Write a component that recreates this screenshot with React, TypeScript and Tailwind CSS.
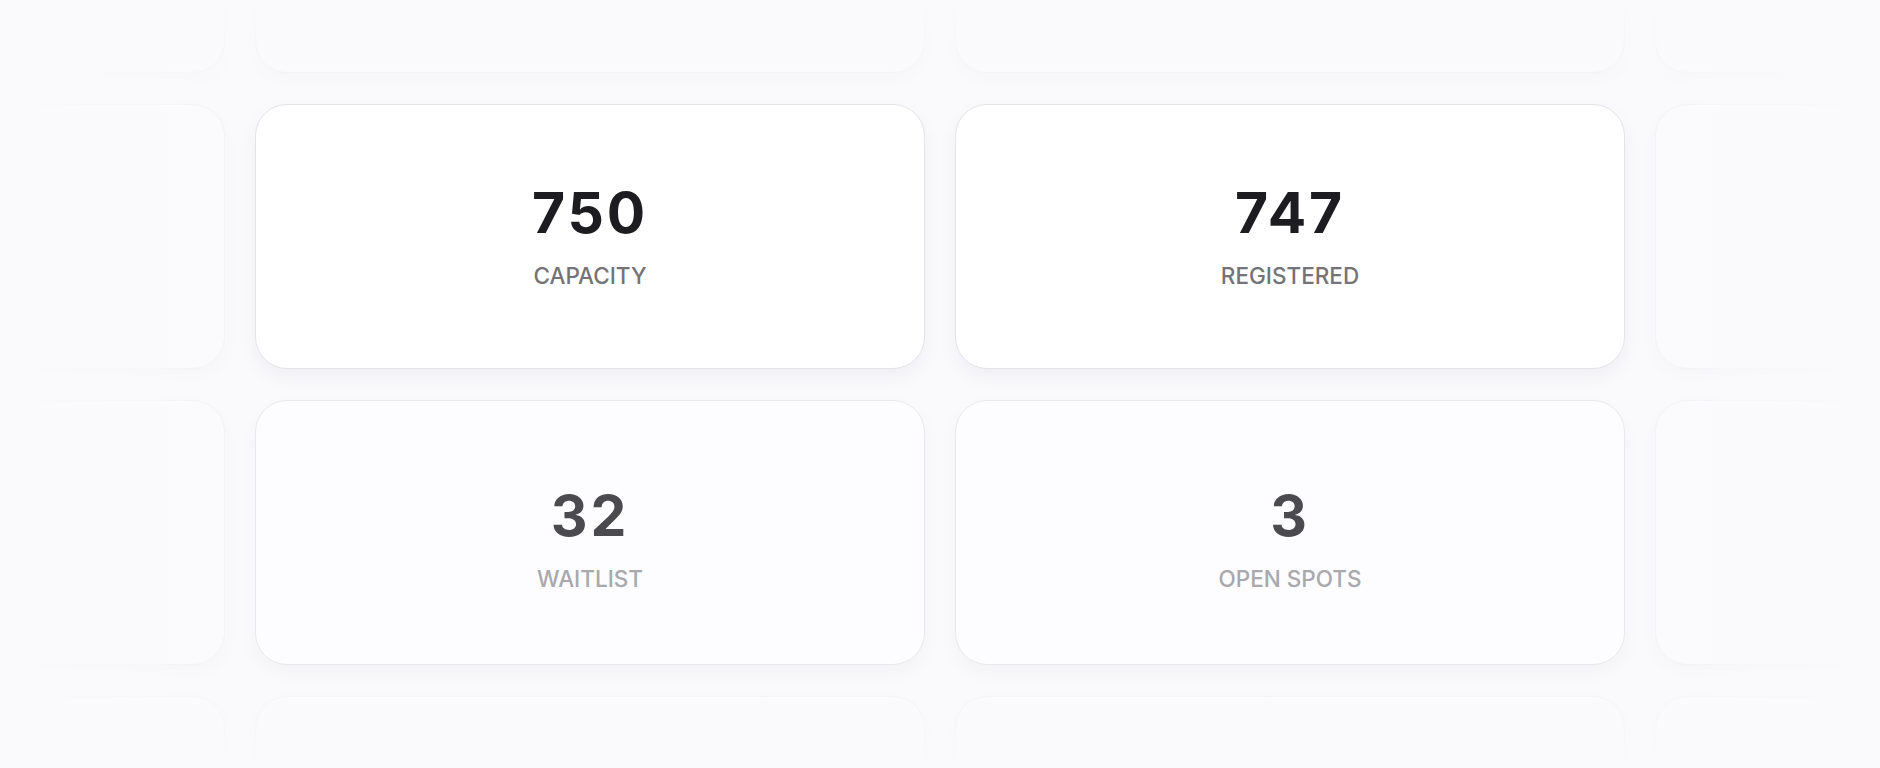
import React from 'react';

// ─── Stat card grid ────────────────────────────────────────────────────────────

type Stat = { value: string; label: string; dim?: boolean };

const stats: Stat[] = [
  { value: '750', label: 'Capacity' },
  { value: '747', label: 'Registered' },
  { value: '32', label: 'Waitlist', dim: true },
  { value: '3', label: 'Open Spots', dim: true },
];

const GhostCard: React.FC = () => (
  <div className="h-[265px] rounded-[32px] border border-[#ecebef] bg-[#fcfbfd] opacity-60 shadow-[0_6px_16px_rgba(20,10,40,0.03)]" />
);

const StatCard: React.FC<{ stat: Stat }> = ({ stat }) => (
  <div
    className={
      stat.dim
        ? 'flex h-[265px] flex-col items-center justify-center rounded-[32px] border border-[#e9e8ec] bg-[#fdfcfe] pt-[14px] shadow-[0_8px_20px_rgba(20,10,40,0.03)]'
        : 'flex h-[265px] flex-col items-center justify-center rounded-[32px] border border-[#e4e3e7] bg-white shadow-[0_8px_20px_rgba(20,10,40,0.045)]'
    }
  >
    <div
      className={
        stat.dim
          ? 'text-[57px] leading-none font-bold tracking-[0.05em] text-[#4b4a4f]'
          : 'text-[57px] leading-none font-bold tracking-[0.05em] text-[#1d1c20]'
      }
    >
      {stat.value}
    </div>
    <div
      className={
        stat.dim
          ? 'mt-[22px] text-[22.5px] leading-[26px] font-medium uppercase tracking-normal text-[#a9a8ad]'
          : 'mt-[22px] text-[22.5px] leading-[26px] font-medium uppercase tracking-normal text-[#747378]'
      }
    >
      {stat.label}
    </div>
  </div>
);

export default function App() {
  return (
    <div
      className="relative flex h-[768px] w-full items-center justify-center overflow-hidden bg-[#faf9fc]"
      style={{ fontFamily: 'Inter, "Noto Sans", sans-serif' }}
    >
      <div className="grid shrink-0 grid-cols-[repeat(4,670px)] grid-rows-[repeat(4,265px)] gap-x-[30px] gap-y-[31px]">
        {/* top ghost row */}
        <GhostCard />
        <GhostCard />
        <GhostCard />
        <GhostCard />

        <GhostCard />
        <StatCard stat={stats[0]} />
        <StatCard stat={stats[1]} />
        <GhostCard />

        <GhostCard />
        <StatCard stat={stats[2]} />
        <StatCard stat={stats[3]} />
        <GhostCard />

        {/* bottom ghost row */}
        <GhostCard />
        <GhostCard />
        <GhostCard />
        <GhostCard />
      </div>

      {/* edge fades */}
      <div className="pointer-events-none absolute inset-y-0 left-0 w-[260px] bg-gradient-to-r from-[#faf9fc] via-[#faf9fc]/60 to-transparent" />
      <div className="pointer-events-none absolute inset-y-0 right-0 w-[260px] bg-gradient-to-l from-[#faf9fc] via-[#faf9fc]/60 to-transparent" />
      <div className="pointer-events-none absolute inset-x-0 top-0 h-[90px] bg-gradient-to-b from-[#faf9fc]/90 to-[#faf9fc]/20" />
      <div className="pointer-events-none absolute inset-x-0 bottom-0 h-[90px] bg-gradient-to-t from-[#faf9fc]/90 to-[#faf9fc]/20" />
    </div>
  );
}
